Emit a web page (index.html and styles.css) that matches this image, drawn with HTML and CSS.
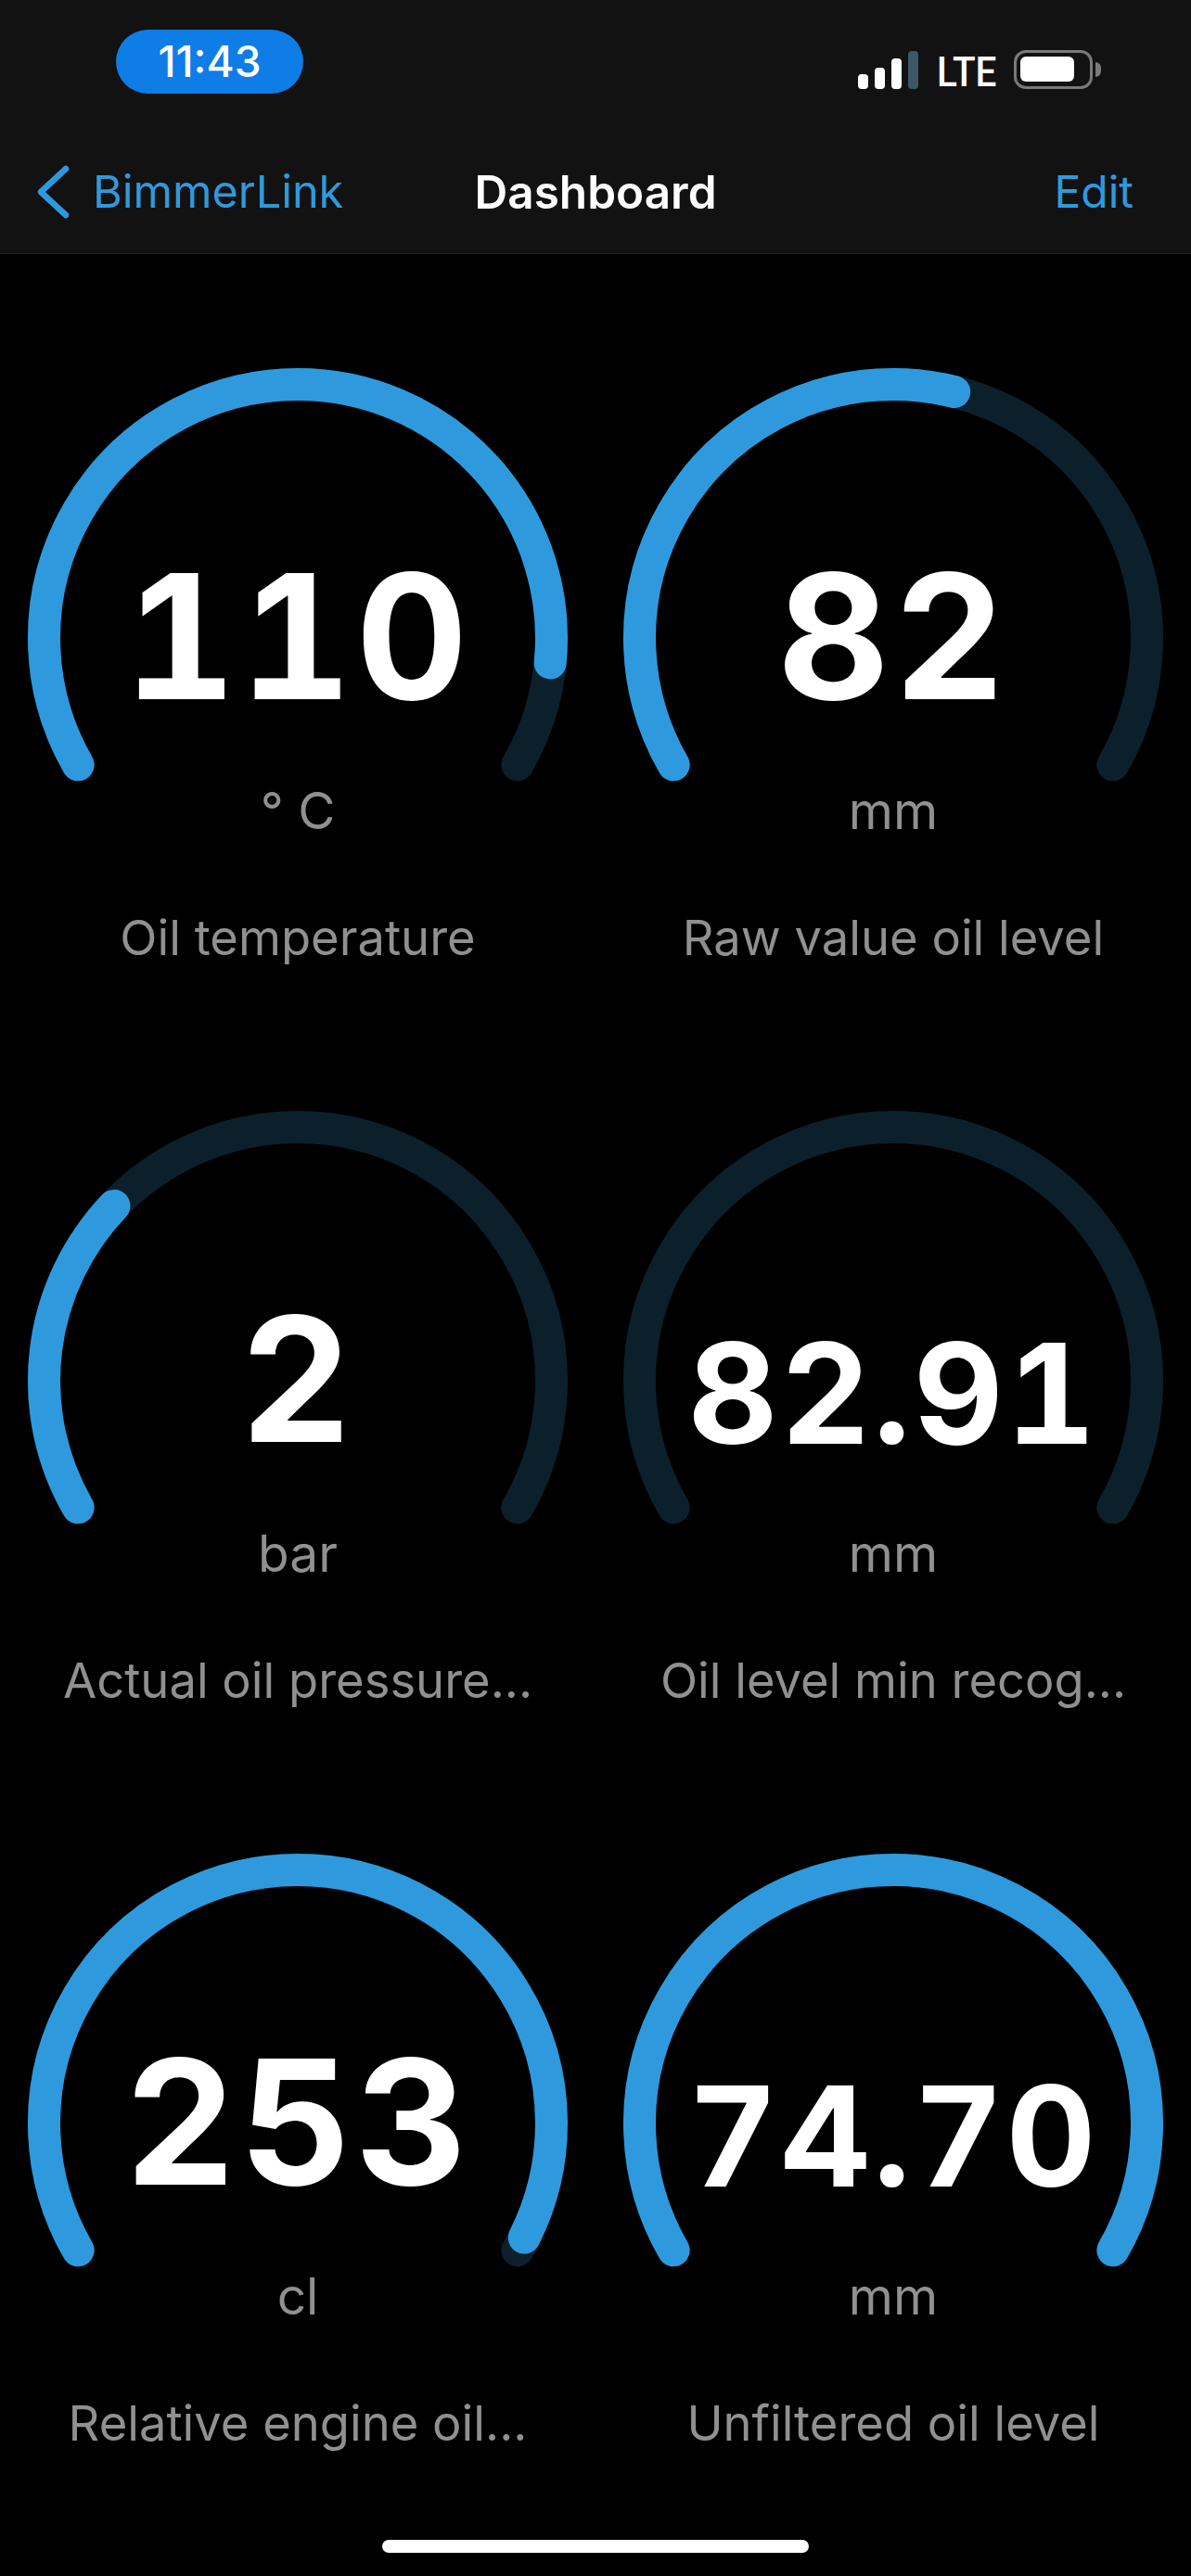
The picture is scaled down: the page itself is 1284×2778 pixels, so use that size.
FILE: index.html
```html
<!DOCTYPE html>
<html lang="en">
<head>
<meta charset="utf-8">
<title>Dashboard</title>
<link rel="stylesheet" href="styles.css">
</head>
<body>
<div class="phone">
  <header class="topbar">
    <div class="status">
      <div class="time">11:43</div>
      <div class="status-right">
        <div class="signal">
          <span class="bar bar1"></span>
          <span class="bar bar2"></span>
          <span class="bar bar3"></span>
          <span class="bar bar4"></span>
        </div>
        <span class="lte">LTE</span>
        <div class="battery"><span class="battery-fill"></span></div>
        <span class="battery-nub"></span>
      </div>
    </div>
    <nav class="nav">
      <div class="back">
        <svg class="chevron" width="40" height="60" viewBox="0 0 40 60"><path d="M31 4 L4 29 L31 54" fill="none" stroke="#2e9add" stroke-width="6.5" stroke-linecap="round" stroke-linejoin="round"/></svg>
        <span class="back-text">BimmerLink</span>
      </div>
      <div class="title">Dashboard</div>
      <div class="edit">Edit</div>
    </nav>
  </header>
  <main class="grid">
    <section class="cell">
      <div class="gauge">
        <svg class="dial" width="642" height="447" viewBox="0 0 642 447"><path class="track" pathLength="240" d="M84.14 427.75 A273.5 273.5 0 1 1 557.86 427.75"/><path class="fill" pathLength="240" stroke-dasharray="215.65 300" d="M84.14 427.75 A273.5 273.5 0 1 1 557.86 427.75"/></svg>
        <div class="value">110</div>
      </div>
      <div class="unit">° C</div>
      <div class="label">Oil temperature</div>
    </section>
    <section class="cell">
      <div class="gauge">
        <svg class="dial" width="642" height="447" viewBox="0 0 642 447"><path class="track" pathLength="240" d="M84.14 427.75 A273.5 273.5 0 1 1 557.86 427.75"/><path class="fill" pathLength="240" stroke-dasharray="133.9 300" d="M84.14 427.75 A273.5 273.5 0 1 1 557.86 427.75"/></svg>
        <div class="value">82</div>
      </div>
      <div class="unit">mm</div>
      <div class="label">Raw value oil level</div>
    </section>
    <section class="cell">
      <div class="gauge">
        <svg class="dial" width="642" height="447" viewBox="0 0 642 447"><path class="track" pathLength="240" d="M84.14 427.75 A273.5 273.5 0 1 1 557.86 427.75"/><path class="fill" pathLength="240" stroke-dasharray="73.6 300" d="M84.14 427.75 A273.5 273.5 0 1 1 557.86 427.75"/></svg>
        <div class="value">2</div>
      </div>
      <div class="unit">bar</div>
      <div class="label">Actual oil pressure...</div>
    </section>
    <section class="cell">
      <div class="gauge">
        <svg class="dial" width="642" height="447" viewBox="0 0 642 447"><path class="track" pathLength="240" d="M84.14 427.75 A273.5 273.5 0 1 1 557.86 427.75"/></svg>
        <div class="value value-small">82.91</div>
      </div>
      <div class="unit">mm</div>
      <div class="label">Oil level min recog...</div>
    </section>
    <section class="cell">
      <div class="gauge">
        <svg class="dial" width="642" height="447" viewBox="0 0 642 447"><path class="track" pathLength="240" d="M84.14 427.75 A273.5 273.5 0 1 1 557.86 427.75"/><path class="fill" pathLength="240" stroke-dasharray="236.7 300" d="M84.14 427.75 A273.5 273.5 0 1 1 557.86 427.75"/></svg>
        <div class="value">253</div>
      </div>
      <div class="unit">cl</div>
      <div class="label">Relative engine oil...</div>
    </section>
    <section class="cell">
      <div class="gauge">
        <svg class="dial" width="642" height="447" viewBox="0 0 642 447"><path class="fill" pathLength="240" d="M84.14 427.75 A273.5 273.5 0 1 1 557.86 427.75"/></svg>
        <div class="value value-small">74.70</div>
      </div>
      <div class="unit">mm</div>
      <div class="label">Unfiltered oil level</div>
    </section>
  </main>
  <div class="home"></div>
</div>
</body>
</html>
```

FILE: styles.css
```css
* { box-sizing: border-box; }
html, body { margin: 0; padding: 0; background: #000; }
body { font-family: Inter, "Noto Sans", "Liberation Sans", sans-serif; }
.phone { width: 1284px; height: 2778px; position: relative; overflow: hidden; background: #000; }

.topbar { height: 274px; background: #121212; border-bottom: 1px solid #14222b; }
.status { height: 150px; padding: 32px 97px 0 125px; display: flex; justify-content: space-between; align-items: flex-start; }
.time { width: 202px; height: 69px; border-radius: 35px; background: #0e7de6; color: #fff; font-size: 46px; font-weight: 500; line-height: 69px; text-align: center; }
.status-right { display: flex; align-items: flex-end; margin-top: 22px; height: 42px; }
.signal { display: flex; align-items: flex-end; gap: 7px; height: 42px; }
.bar { display: block; width: 11px; border-radius: 4px; background: #fff; }
.bar1 { height: 16px; }
.bar2 { height: 23px; }
.bar3 { height: 33px; }
.bar4 { height: 41px; background: #3c5866; }
.lte { width: 62px; margin: 0 21px 0 20px; color: #fff; font-family: Roboto, sans-serif; font-weight: 500; font-size: 44px; line-height: 36px; height: 36px; transform-origin: left center; transform: scaleX(.92); white-space: nowrap; }
.battery { width: 85px; height: 42px; border: 3.5px solid #7a7a7a; border-radius: 13px; padding: 4px; }
.battery-fill { display: block; width: 58px; height: 27px; border-radius: 6px; background: #fff; }
.battery-nub { align-self: center; width: 6px; height: 16px; margin-left: 3px; border-radius: 0 6px 6px 0; background: #7a7a7a; }

.nav { height: 123px; padding: 0 62px 0 40px; display: flex; align-items: flex-start; position: relative; }
.back { display: flex; align-items: flex-start; color: #2e9add; font-size: 48.5px; }
.chevron { margin-top: 28px; display: block; }
.back-text { margin-left: 20px; line-height: 60px; margin-top: 27px; }
.title { position: absolute; left: 0; right: 0; top: 27px; text-align: center; color: #fff; font-size: 49.5px; font-weight: 600; line-height: 60px; }
.edit { margin-left: auto; color: #2e9add; font-size: 48px; line-height: 60px; margin-top: 27px; }

.grid { display: grid; grid-template-columns: 642px 642px; grid-auto-rows: 801px; padding-top: 123px; }
.cell { display: flex; flex-direction: column; align-items: center; }
.gauge { position: relative; width: 642px; height: 447px; }
.dial { display: block; }
.track, .fill { fill: none; stroke-width: 35; stroke-linecap: round; }
.track { stroke: #0b202b; }
.fill { stroke: #2e9add; }
.value { position: absolute; left: 0; right: 0; top: 164px; height: 250px; display: flex; align-items: flex-end; justify-content: center; color: #fff; font-size: 187px; font-weight: 650; line-height: 250px; letter-spacing: 4px; font-variant-numeric: tabular-nums; }
.value-small { font-size: 150px; top: 180px; letter-spacing: 3px; }
.unit { margin-top: 0; color: #909090; font-size: 55px; line-height: 60px; text-align: center; }
.label { margin-top: 77px; color: #909090; font-size: 52.5px; line-height: 60px; text-align: center; white-space: nowrap; }

.home { position: absolute; left: 412px; top: 2739px; width: 460px; height: 14px; border-radius: 7px; background: #fff; }
```
